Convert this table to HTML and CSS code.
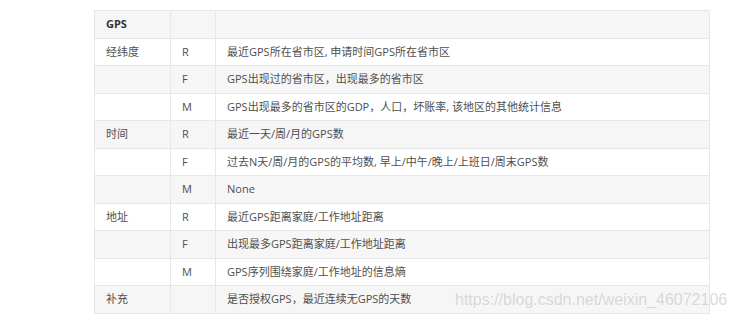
FILE: index.html
```html
<!DOCTYPE html>
<html lang="zh">
<head>
<meta charset="utf-8">
<link rel="stylesheet" href="styles.css">
</head>
<body>
<div class="page">
  <table class="rfm">
    <colgroup>
      <col class="c1"><col class="c2"><col class="c3">
    </colgroup>
    <thead>
      <tr><th>GPS</th><th></th><th></th></tr>
    </thead>
    <tbody>
      <tr><td>经纬度</td><td>R</td><td>最近GPS所在省市区, 申请时间GPS所在省市区</td></tr>
      <tr><td></td><td>F</td><td>GPS出现过的省市区，出现最多的省市区</td></tr>
      <tr><td></td><td>M</td><td>GPS出现最多的省市区的GDP，人口，坏账率, 该地区的其他统计信息</td></tr>
      <tr><td>时间</td><td>R</td><td>最近一天/周/月的GPS数</td></tr>
      <tr><td></td><td>F</td><td>过去N天/周/月的GPS的平均数, 早上/中午/晚上/上班日/周末GPS数</td></tr>
      <tr><td></td><td>M</td><td>None</td></tr>
      <tr><td>地址</td><td>R</td><td>最近GPS距离家庭/工作地址距离</td></tr>
      <tr><td></td><td>F</td><td>出现最多GPS距离家庭/工作地址距离</td></tr>
      <tr><td></td><td>M</td><td>GPS序列围绕家庭/工作地址的信息熵</td></tr>
      <tr><td>补充</td><td></td><td>是否授权GPS，最近连续无GPS的天数</td></tr>
    </tbody>
  </table>
  <div class="watermark">https://blog.csdn.net/weixin_46072106</div>
</div>
</body>
</html>
```

FILE: styles.css
```css
html, body {
  margin: 0;
  padding: 0;
  background: #ffffff;
}

.page {
  position: relative;
  width: 735px;
  height: 320px;
  padding: 10px 0 0 94px;
  box-sizing: border-box;
}

.rfm {
  border-collapse: collapse;
  table-layout: fixed;
  width: 615px;
  font-family: "Open Sans", "Noto Sans CJK SC", sans-serif;
  font-size: 11px;
  color: #4f4f4f;
}

.c1 { width: 76px; }
.c2 { width: 45px; }
.c3 { width: 494px; }

.rfm th,
.rfm td {
  border: 1px solid #e7e7e7;
  height: 26.5px;
  padding: 0 0 0 11px;
  text-align: left;
  vertical-align: middle;
  white-space: nowrap;
  line-height: 14px;
}

.rfm th {
  font-weight: 700;
  color: #333333;
  background: #f6f6f6;
}

.rfm tbody tr:nth-child(even) td {
  background: #f6f6f6;
}

.rfm tbody tr:nth-child(odd) td {
  background: #ffffff;
}

.watermark {
  position: absolute;
  left: 455px;
  top: 290px;
  font-family: "Liberation Sans", Arial, sans-serif;
  font-size: 16px;
  line-height: 20px;
  color: rgba(190, 190, 190, 0.55);
  white-space: nowrap;
}
```
